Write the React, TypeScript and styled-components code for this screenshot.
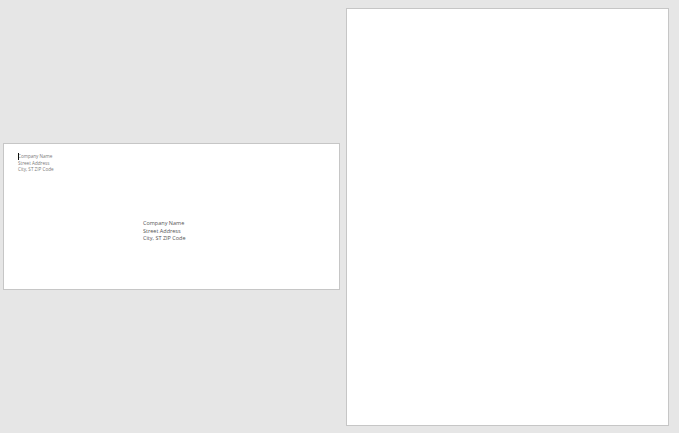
import styled, { createGlobalStyle } from "styled-components";

const GlobalStyle = createGlobalStyle`
  html, body {
    margin: 0;
    padding: 0;
    background: #e6e6e6;
    overflow: hidden;
  }
`;

const Workspace = styled.div`
  width: 679px;
  height: 433px;
  box-sizing: border-box;
  padding: 8px 10px 7px 3px;
  display: flex;
  align-items: center;
  gap: 6px;
  background: #e6e6e6;
  font-family: "Open Sans", "Liberation Sans", sans-serif;
`;

const Sheet = styled.div`
  box-sizing: border-box;
  background: #fff;
  border: 1px solid #c6c6c6;
  flex: none;
`;

const Envelope = styled(Sheet)`
  width: 337px;
  height: 147px;
  margin-bottom: 1px;
  padding: 9px 0 0 14px;
`;

const Letter = styled(Sheet)`
  width: 323px;
  height: 418px;
`;

const ReturnAddress = styled.div`
  position: relative;
  width: max-content;
  font-size: 4.6px;
  line-height: 6.5px;
  color: #7a7a7a;
`;

const Caret = styled.span`
  position: absolute;
  left: 0;
  top: 0;
  width: 1px;
  height: 7px;
  background: #111;
`;

const MailingAddress = styled.div`
  margin: 47.5px 0 0 125px;
  font-size: 5.5px;
  line-height: 7.5px;
  color: #555;
`;

const Line = styled.div`
  white-space: nowrap;
`;

const App = () => {
  return (
    <>
      <GlobalStyle />
      <Workspace>
        <Envelope>
          <ReturnAddress>
            <Caret />
            <Line>Company Name</Line>
            <Line>Street Address</Line>
            <Line>City, ST ZIP Code</Line>
          </ReturnAddress>
          <MailingAddress>
            <Line>Company Name</Line>
            <Line>Street Address</Line>
            <Line>City, ST ZIP Code</Line>
          </MailingAddress>
        </Envelope>
        <Letter />
      </Workspace>
    </>
  );
};

export default App;
